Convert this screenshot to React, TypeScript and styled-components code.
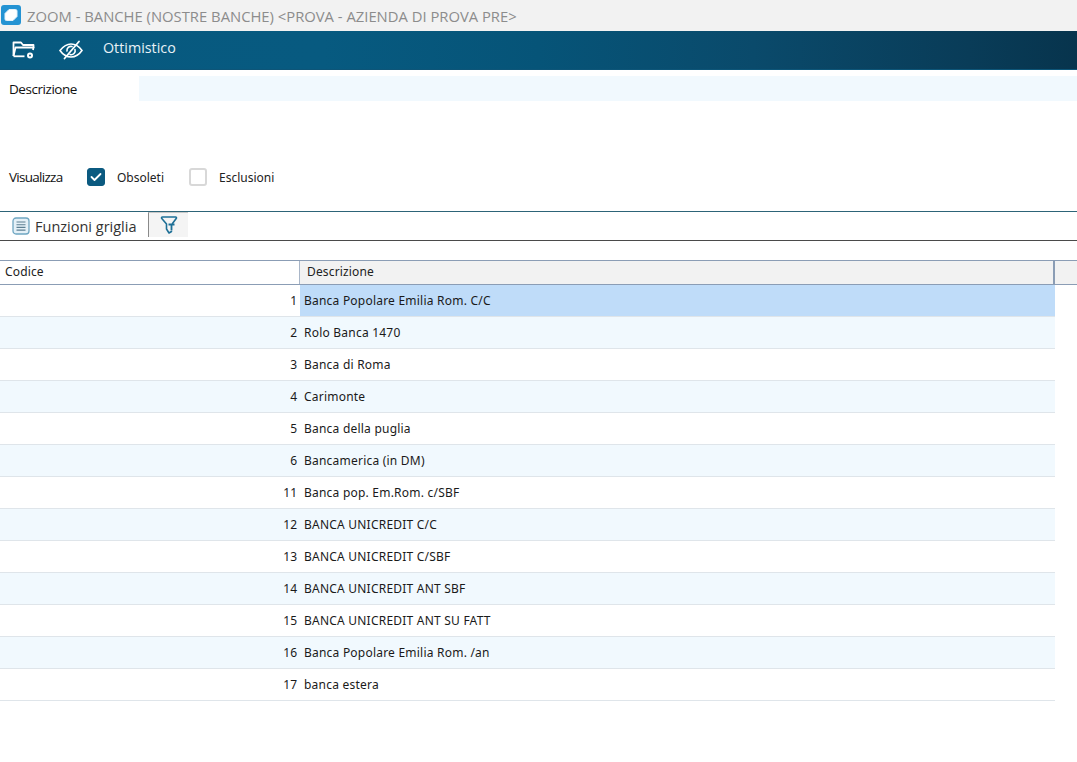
import React from "react";
import styled, { createGlobalStyle } from "styled-components";

const Global = createGlobalStyle`
  html, body { margin: 0; padding: 0; background: #fff; }
  body { font-family: "Open Sans", "Liberation Sans", sans-serif; }
`;

const Page = styled.div`
  width: 1077px;
  height: 762px;
  overflow: hidden;
  display: flex;
  flex-direction: column;
`;
const TitleBar = styled.div`
  height: 31px;
  background: #f2f2f2;
  display: flex;
  align-items: center;
  gap: 6px;
  padding-left: 1px;
  padding-bottom: 2px;
  box-sizing: border-box;
`;
const TitleText = styled.span`
  font-size: 14.8px;
  color: #8c8c8c;
  white-space: nowrap;
  position: relative;
  top: 1px;
`;
const Toolbar = styled.div`
  height: 39px;
  box-sizing: border-box;
  border-bottom: 1px solid #0d5578;
  background: linear-gradient(90deg, #07597f 0%, #075a80 30%, #065478 50%, #0a4a6b 70%, #093c58 90%, #07344d 100%);
  display: flex;
  align-items: center;
  color: #fff;
`;
const ToolIcon = styled.span<{ $left: number; $width: number }>`
  display: flex;
  margin-left: ${(p) => p.$left}px;
  width: ${(p) => p.$width}px;
`;
const ToolLabel = styled.span`
  font-size: 14.3px;
  margin-left: 20px;
  position: relative;
  top: -3px;
  color: #e8f1f6;
`;
const FormRow = styled.div`
  display: flex;
  align-items: center;
  height: 25px;
  margin-top: 6px;
`;
const FieldLabel = styled.label<{ $width: number; $tight: number }>`
  font-size: 13.5px;
  letter-spacing: ${(p) => p.$tight}px;
  color: #111;
  padding-left: 9px;
  box-sizing: border-box;
  width: ${(p) => p.$width}px;
  flex: none;
`;
const TextField = styled.div`
  flex: 1;
  height: 25px;
  background: #f1f9fe;
`;
const OptionsRow = styled.div`
  display: flex;
  align-items: center;
  height: 20px;
  margin-top: 66px;
`;
const CheckBox = styled.span<{ $on?: boolean }>`
  width: 18px;
  height: 18px;
  box-sizing: border-box;
  border-radius: 3px;
  flex: none;
  display: flex;
  align-items: center;
  justify-content: center;
  background: ${(p) => (p.$on ? "#0b5a80" : "#fff")};
  border: ${(p) => (p.$on ? "1px solid #0b5a80" : "2px solid #d8d8d8")};
`;
const OptionLabel = styled.span<{ $width: number }>`
  font-family: "Noto Sans", sans-serif;
  font-size: 12px;
  color: #222;
  margin-left: 12px;
  width: ${(p) => p.$width}px;
  flex: none;
`;
const GridTools = styled.div`
  margin-top: 24px;
  height: 30px;
  box-sizing: border-box;
  border-top: 1px solid #2d6478;
  border-bottom: 1px solid #4a4a4a;
  display: flex;
  align-items: center;
`;
const GridToolButton = styled.div`
  display: flex;
  align-items: center;
  gap: 5px;
  padding-left: 12px;
  width: 148px;
  box-sizing: border-box;
  font-size: 14.5px;
  color: #333;
`;
const FilterButton = styled.div`
  width: 40px;
  height: 25px;
  margin-top: -3px;
  box-sizing: border-box;
  border-left: 1px solid #8a8a8a;
  border-top: 1px solid #c8c8c8;
  background: #f4f4f4;
  display: flex;
  align-items: center;
  justify-content: center;
`;
const Grid = styled.div`
  margin-top: 19px;
  font-family: "Noto Sans", sans-serif;
  font-size: 12px;
`;
const HeaderRow = styled.div`
  display: flex;
  height: 25px;
  box-sizing: border-box;
  border-top: 1px solid #8b9db5;
  border-bottom: 1px solid #8b9db5;
`;
const HeaderCell = styled.div<{ $width?: number; $shade?: boolean }>`
  width: ${(p) => (p.$width ? `${p.$width}px` : "auto")};
  flex: ${(p) => (p.$width ? "none" : "1")};
  box-sizing: border-box;
  background: ${(p) => (p.$shade ? "#f2f2f2" : "#fff")};
  border-right: ${(p) => (p.$shade ? "2px solid #8b9db5" : "1px solid #a9b6c8")};
  padding-left: ${(p) => (p.$shade ? 7 : 5)}px;
  line-height: 21px;
  color: #222;
  letter-spacing: 0.15px;
  &:last-child { border-right: none; background: #f2f2f2; }
`;
const Row = styled.div<{ $alt?: boolean }>`
  display: flex;
  width: 1055px;
  height: 32px;
  box-sizing: border-box;
  border-bottom: 1px solid #dfe5ea;
  background: ${(p) => (p.$alt ? "#f1f9fe" : "#fff")};
  line-height: 31px;
  color: #1a1a1a;
`;
const CodeCell = styled.div`
  width: 300px;
  flex: none;
  box-sizing: border-box;
  text-align: right;
  padding-right: 3px;
`;
const DescCell = styled.div<{ $selected?: boolean }>`
  flex: 1;
  padding-left: 4px;
  letter-spacing: 0.22px;
  background: ${(p) => (p.$selected ? "#bfdcf9" : "transparent")};
`;

const rows: [number, string][] = [
  [1, "Banca Popolare Emilia Rom. C/C"],
  [2, "Rolo Banca 1470"],
  [3, "Banca di Roma"],
  [4, "Carimonte"],
  [5, "Banca della puglia"],
  [6, "Bancamerica (in DM)"],
  [11, "Banca pop. Em.Rom. c/SBF"],
  [12, "BANCA UNICREDIT C/C"],
  [13, "BANCA UNICREDIT C/SBF"],
  [14, "BANCA UNICREDIT ANT SBF"],
  [15, "BANCA UNICREDIT ANT SU FATT"],
  [16, "Banca Popolare Emilia Rom. /an"],
  [17, "banca estera"],
];

const AppLogo = () => (
  <svg width="20" height="20" viewBox="0 0 20 20">
    <rect x="0" y="0" width="20" height="20" rx="3" fill="#2493d3" />
    <path d="M8 4.500h6.500A1.500 1.500 0 0 1 16 6V11.500L12 15.500H5.500A1.500 1.500 0 0 1 4 14V8.500Z" fill="#fff" stroke="#e3f2fb" strokeWidth="1" strokeLinejoin="round" />
  </svg>
);

const FolderIcon = () => (
  <svg width="24" height="20" viewBox="0 0 24 20" fill="none" stroke="#fff" strokeWidth="1.800" strokeLinejoin="round">
    <path d="M1.500 16V2.500h7.500l2 2.500h10.500v3" />
    <path d="M1.500 16 3.500 7.500H21.500L21 10" />
    <path d="M1.500 16.300h11" />
    <circle cx="18" cy="15.500" r="3" fill="#fff" stroke="none" />
    <circle cx="18" cy="15.500" r="1" fill="#07597f" stroke="none" />
  </svg>
);

const EyeOffIcon = () => (
  <svg width="24" height="20" viewBox="0 0 24 20" fill="none" stroke="#fff" strokeWidth="1.600" strokeLinecap="round">
    <path d="M1 10.500C5 5.500 9 4 12 4c3.500 0 7.500 1.500 11 6.500-3.500 5-7.500 6.500-11 6.500-3.500 0-7.500-1.500-11-6.500z" />
    <path d="M8 11a4 4 0 0 1 5-4.500M16 9.500a4 4 0 0 1-5 5" />
    <path d="M5.500 18.500 20 1.500" strokeWidth="1.800" />
  </svg>
);

const Check = () => (
  <svg width="12" height="10" viewBox="0 0 12 10" fill="none" stroke="#fff" strokeWidth="1.800" strokeLinecap="round" strokeLinejoin="round">
    <path d="M1.500 5 4.500 8 10.500 2" />
  </svg>
);

const ListIcon = () => (
  <svg width="18" height="18" viewBox="0 0 18 18" fill="#e4f0f7" stroke="#6fa6c2" strokeWidth="1.300">
    <rect x="1" y="1" width="16" height="16" rx="3" />
    <path d="M4.500 5h9M4.500 7.700h9M4.500 10.400h9M4.500 13.100h9" fill="none" stroke="#5c7f92" strokeWidth="1.100" />
  </svg>
);

const FilterIcon = () => (
  <svg width="18" height="20" viewBox="0 0 18 20" fill="none" stroke="#1d6f96" strokeWidth="1.600" strokeLinejoin="round" strokeLinecap="round">
    <path d="M2.500 2h13c1 0 1.300.8.700 1.500L12.500 8.500M2.500 2c-1 0-1.300.8-.7 1.500L6.500 9v5l2.500 4 2.500-1.500" />
    <path d="M8.500 9.500h6M11.500 9.500v6" strokeWidth="1.800" strokeLinecap="butt" />
  </svg>
);

export default function App() {
  return (
    <Page>
      <Global />
      <TitleBar>
        <AppLogo />
        <TitleText>ZOOM - BANCHE (NOSTRE BANCHE) &lt;PROVA - AZIENDA DI PROVA PRE&gt;</TitleText>
      </TitleBar>
      <Toolbar>
        <ToolIcon $left={12} $width={24}><FolderIcon /></ToolIcon>
        <ToolIcon $left={23} $width={24}><EyeOffIcon /></ToolIcon>
        <ToolLabel>Ottimistico</ToolLabel>
      </Toolbar>
      <FormRow>
        <FieldLabel $width={139} $tight={-0.45}>Descrizione</FieldLabel>
        <TextField />
      </FormRow>
      <OptionsRow>
        <FieldLabel $width={87} $tight={-0.72}>Visualizza</FieldLabel>
        <CheckBox $on><Check /></CheckBox>
        <OptionLabel $width={72}>Obsoleti</OptionLabel>
        <CheckBox />
        <OptionLabel $width={80}>Esclusioni</OptionLabel>
      </OptionsRow>
      <GridTools>
        <GridToolButton><ListIcon />Funzioni griglia</GridToolButton>
        <FilterButton><FilterIcon /></FilterButton>
      </GridTools>
      <Grid>
        <HeaderRow>
          <HeaderCell $width={300}>Codice</HeaderCell>
          <HeaderCell $width={755} $shade>Descrizione</HeaderCell>
          <HeaderCell />
        </HeaderRow>
        {rows.map(([code, desc], i) => (
          <Row key={code} $alt={i % 2 === 1}>
            <CodeCell>{code}</CodeCell>
            <DescCell $selected={i === 0}>{desc}</DescCell>
          </Row>
        ))}
      </Grid>
    </Page>
  );
}
